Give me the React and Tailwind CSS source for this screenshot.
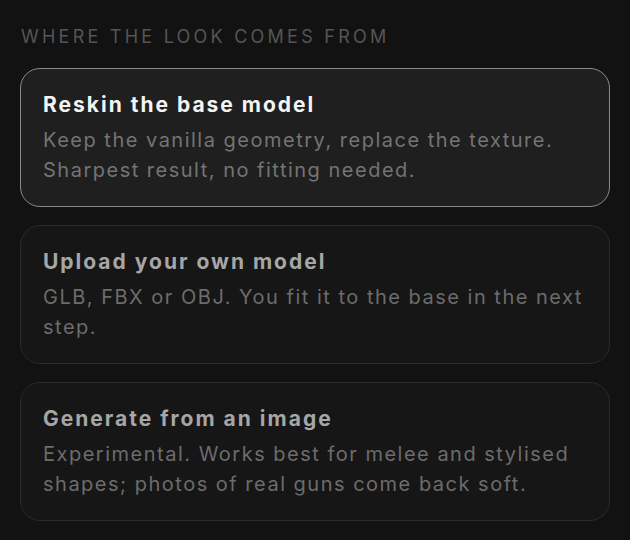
import React from "react"

const options = [
  {
    title: "Reskin the base model",
    desc: "Keep the vanilla geometry, replace the texture. Sharpest result, no fitting needed.",
    active: true,
  },
  {
    title: "Upload your own model",
    desc: "GLB, FBX or OBJ. You fit it to the base in the next step.",
  },
  {
    title: "Generate from an image",
    desc: "Experimental. Works best for melee and stylised shapes; photos of real guns come back soft.",
  },
]

function Option({ title, desc, active }) {
  return (
    <div
      className={
        "rounded-[20px] border pl-[22px] pr-[16px] pt-[22px] pb-[21px] " +
        (active ? "border-[#8a8a8a] bg-[#1f1f1f]" : "border-[#2a2a2a] bg-[#161616]")
      }
    >
      <div
        className={
          "text-[21px] leading-[28px] font-bold tracking-[0.095em] " +
          (active ? "text-[#f4f4f4]" : "text-[#a6a6a6]")
        }
      >
        {title}
      </div>
      <p
        className={
          "mt-[6px] text-[20px] leading-[30px] tracking-[0.075em] " +
          (active ? "text-[#747474]" : "text-[#6c6c6c]")
        }
      >
        {desc}
      </p>
    </div>
  )
}

export default function App() {
  return (
    <div
      className="min-h-screen bg-[#121212] px-5 pt-[26px]"
      style={{ fontFamily: "Inter, 'Noto Sans', sans-serif" }}
    >
      <div className="pl-px text-[18px] leading-[22px] tracking-[0.18em] text-[#555555]">
        WHERE THE LOOK COMES FROM
      </div>
      <div className="mt-[20px] flex w-[590px] flex-col gap-[18px]">
        {options.map((o) => (
          <Option key={o.title} {...o} />
        ))}
      </div>
    </div>
  )
}
